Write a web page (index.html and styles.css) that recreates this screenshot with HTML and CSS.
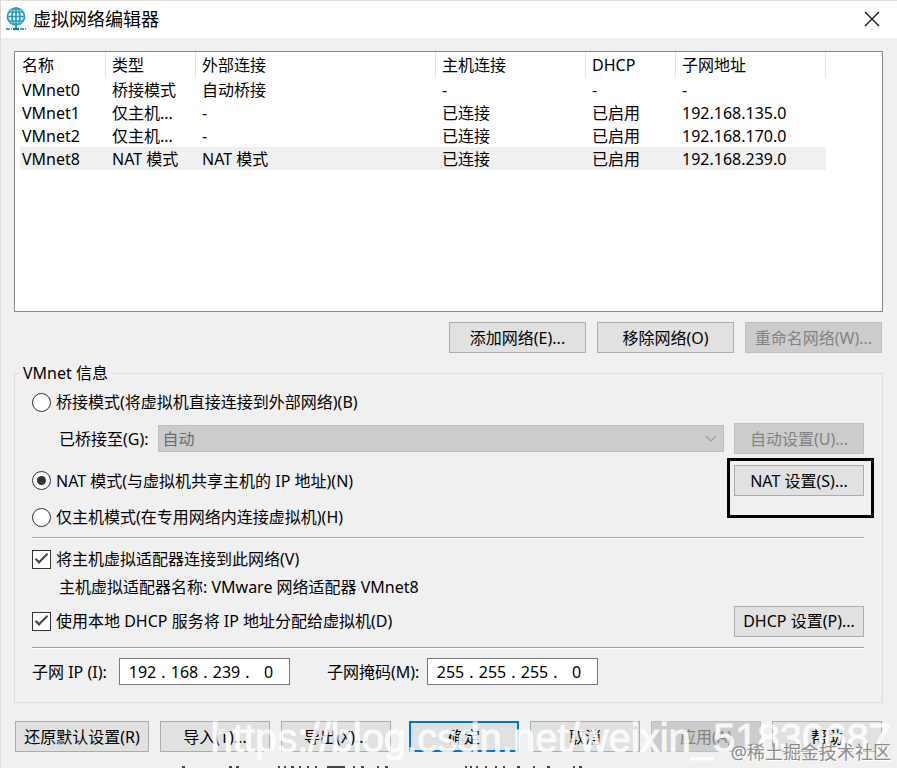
FILE: index.html
```
<!DOCTYPE html>
<html lang="zh-CN">
  <head>
    <meta charset="UTF-8" />
    <title>虚拟网络编辑器</title>
    <link rel="stylesheet" href="styles.css">
  </head>
  <body>
    <header class="titlebar">
      <svg class="app-icon" width="22" height="24" viewBox="0 0 22 24" fill="none" stroke="#2499c0" stroke-width="1.7">
        <circle cx="11" cy="9.500" r="8.500" />
        <ellipse cx="11" cy="9.500" rx="4" ry="8.500" />
        <path d="M11 1v20M2.500 9.500h17M4 5h14M4 14h14" />
        <path d="M1 22h6M15 22h6" stroke="#3fae9c" stroke-width="2" stroke-dasharray="4 1" />
        <path d="M8 22h6" stroke="#167a9c" stroke-width="2.400" />
      </svg>
      <h1>虚拟网络编辑器</h1>
      <button class="close" type="button" aria-label="关闭">
        <svg width="16" height="16" viewBox="0 0 16 16" stroke="#111" stroke-width="1.3">
          <path d="M1 1l14 14M15 1L1 15" />
        </svg>
      </button>
    </header>

    <main>
      <div class="list">
        <table>
          <colgroup>
            <col class="col-name" />
            <col class="col-type" />
            <col class="col-external" />
            <col class="col-host" />
            <col class="col-dhcp" />
            <col class="col-subnet" />
          </colgroup>
          <thead>
            <tr>
              <th>名称</th>
              <th>类型</th>
              <th>外部连接</th>
              <th>主机连接</th>
              <th>DHCP</th>
              <th>子网地址</th>
            </tr>
          </thead>
          <tbody>
            <tr>
              <td>VMnet0</td>
              <td>桥接模式</td>
              <td>自动桥接</td>
              <td>-</td>
              <td>-</td>
              <td>-</td>
            </tr>
            <tr>
              <td>VMnet1</td>
              <td>仅主机...</td>
              <td>-</td>
              <td>已连接</td>
              <td>已启用</td>
              <td>192.168.135.0</td>
            </tr>
            <tr>
              <td>VMnet2</td>
              <td>仅主机...</td>
              <td>-</td>
              <td>已连接</td>
              <td>已启用</td>
              <td>192.168.170.0</td>
            </tr>
            <tr class="selected">
              <td>VMnet8</td>
              <td>NAT 模式</td>
              <td>NAT 模式</td>
              <td>已连接</td>
              <td>已启用</td>
              <td>192.168.239.0</td>
            </tr>
          </tbody>
        </table>
      </div>

      <div class="list-actions">
        <button class="btn" type="button">添加网络(E)...</button>
        <button class="btn" type="button">移除网络(O)</button>
        <button class="btn" type="button" disabled>重命名网络(W)...</button>
      </div>

      <fieldset>
        <legend>VMnet 信息</legend>

        <div class="row">
          <input type="radio" name="mode" id="bridged" />
          <label for="bridged">桥接模式(将虚拟机直接连接到外部网络)(B)</label>
        </div>
        <div class="row row-bridge">
          <label class="sub" for="adapter">已桥接至(G):</label>
          <div class="combo">
            <select id="adapter" disabled>
              <option>自动</option>
            </select>
            <svg width="12" height="8" viewBox="0 0 12 8" fill="none" stroke="#a0a0a0" stroke-width="1.2">
              <path d="M1 1l5 5 5-5" />
            </svg>
          </div>
          <button class="btn side" type="button" disabled>自动设置(U)...</button>
        </div>
        <div class="row row-nat">
          <input type="radio" name="mode" id="nat" checked />
          <label for="nat">NAT 模式(与虚拟机共享主机的 IP 地址)(N)</label>
          <div class="marked">
            <button class="btn side" type="button">NAT 设置(S)...</button>
          </div>
        </div>
        <div class="row row-host">
          <input type="radio" name="mode" id="hostonly" />
          <label for="hostonly">仅主机模式(在专用网络内连接虚拟机)(H)</label>
        </div>

        <hr />

        <div class="row row-connect">
          <input type="checkbox" id="connect" checked />
          <label for="connect">将主机虚拟适配器连接到此网络(V)</label>
        </div>
        <p class="sub">主机虚拟适配器名称: VMware 网络适配器 VMnet8</p>
        <div class="row row-dhcp">
          <input type="checkbox" id="dhcp" checked />
          <label for="dhcp">使用本地 DHCP 服务将 IP 地址分配给虚拟机(D)</label>
          <button class="btn side" type="button">DHCP 设置(P)...</button>
        </div>

        <hr />

        <div class="row row-subnet">
          <label for="ip1">子网 IP (I):</label>
          <div class="ip">
            <input type="text" id="ip1" value="192" /><span>.</span>
            <input type="text" aria-label="子网 IP 2" value="168" /><span>.</span>
            <input type="text" aria-label="子网 IP 3" value="239" /><span>.</span>
            <input type="text" aria-label="子网 IP 4" value="0" />
          </div>
          <label class="mask-label" for="mask1">子网掩码(M):</label>
          <div class="ip">
            <input type="text" id="mask1" value="255" /><span>.</span>
            <input type="text" aria-label="子网掩码 2" value="255" /><span>.</span>
            <input type="text" aria-label="子网掩码 3" value="255" /><span>.</span>
            <input type="text" aria-label="子网掩码 4" value="0" />
          </div>
        </div>
      </fieldset>

      <footer>
        <button class="btn restore" type="button">还原默认设置(R)</button>
        <button class="btn" type="button">导入(T)...</button>
        <button class="btn" type="button">导出(X)...</button>
        <button class="btn primary" type="button">确定</button>
        <button class="btn" type="button">取消</button>
        <button class="btn" type="button" disabled>应用(A)</button>
        <button class="btn" type="button">帮助</button>
        <div class="blog-mark">https://blog.csdn.net/weixin_51830687</div>
        <div class="site-mark">@稀土掘金技术社区</div>
      </footer>
    </main>

    <!-- Top edge of the window below -->
    <svg class="below" width="410" height="2" viewBox="0 0 410 2" stroke="#444" stroke-width="2" aria-hidden="true">
      <path d="M3 1h3M50 1h3M57 1h3M99 1h2M105 1h2M112 1h3M120 1h2M128 1h2M136 1h2M148 1h18M174 1h2M182 1h3M198 1h2M206 1h3" />
      <path d="M286 1h2M291 1h2M297 1h2M306 1h2M316 1h2M324 1h2M338 1h3M354 1h2M368 1h3M394 1h2M400 1h3" />
    </svg>
  </body>
</html>
```
FILE: styles.css
```
:root {
  --face: #f0f0f0;
  --button: #e1e1e1;
  --button-line: #adadad;
  --off: #cccccc;
  --off-line: #bfbfbf;
  --off-text: #838383;
  --accent: #0078d7;
}

*,
*::before,
*::after {
  box-sizing: border-box;
  margin: 0;
  padding: 0;
}

body {
  position: relative;
  min-height: 100vh;
  background: var(--face);
  color: #000;
  font-family: "Noto Sans", "Noto Sans CJK SC", sans-serif;
  font-size: 16px;
  line-height: 20px;
  border-left: 1px solid #dcdcdc;
  overflow: hidden;
}

button,
input,
select {
  font: inherit;
  color: inherit;
}

/* Title bar */
.titlebar {
  display: flex;
  align-items: center;
  height: 38px;
  padding: 0 17px 2px 4px;
  background: #fff;
  border-top: 1px solid #e4e0da;
}

.titlebar h1 {
  flex: 1;
  margin-left: 6px;
  font-size: 18px;
  font-weight: 400;
}

.close {
  display: flex;
  border: none;
  background: none;
}

main {
  padding: 13px 14px 0 13px;
}

/* Network list */
.list {
  height: 261px;
  padding-left: 5px;
  background: #fff;
  border: 1px solid #828790;
  overflow: hidden;
}

table {
  width: 806px;
  table-layout: fixed;
  border-collapse: separate;
  border-spacing: 0;
}

.col-name {
  width: 86px;
}

.col-type,
.col-dhcp {
  width: 90px;
}

.col-external {
  width: 240px;
}

.col-host,
.col-subnet {
  width: 150px;
}

th,
td {
  height: 23px;
  padding-left: 6px;
  font-weight: 400;
  text-align: left;
  white-space: nowrap;
}

th {
  height: 26px;
  border-right: 1px solid #e5e5e5;
}

th:first-child,
td:first-child {
  padding-left: 2px;
}

.selected td {
  background: var(--face);
}

/* Buttons */
.btn {
  height: 31px;
  background: var(--button);
  border: 1px solid var(--button-line);
  white-space: nowrap;
}

.btn:disabled {
  background: var(--off);
  border-color: var(--off-line);
  color: var(--off-text);
}

.list-actions {
  display: flex;
  justify-content: flex-end;
  gap: 11px;
  padding: 10px 1px 8px 0;
}

.list-actions .btn {
  width: 137px;
}

.side {
  width: 130px;
  margin-left: auto;
}

/* VMnet settings */
fieldset {
  padding: 0 18px 8px 17px;
  border: 1px solid #dcdcdc;
}

legend {
  margin-left: -13px;
  padding: 0 4px;
  line-height: 24px;
}

.row {
  display: flex;
  align-items: center;
  height: 34px;
}

.row-bridge {
  height: 39px;
}

.row-nat {
  height: 45px;
}

.row-host {
  height: 28px;
  margin-bottom: 6px;
}

.row-connect {
  height: 40px;
}

.row-dhcp {
  height: 52px;
}

.row-subnet {
  height: 45px;
}

.sub {
  padding-left: 27px;
}

p.sub {
  line-height: 16px;
}

input[type="radio"],
input[type="checkbox"] {
  appearance: none;
  display: grid;
  place-items: center;
  width: 19px;
  height: 19px;
  margin-right: 5px;
  background: #fff;
  border: 1px solid #333;
}

input[type="radio"] {
  border-radius: 50%;
}

input[type="radio"]:checked::before {
  content: "";
  width: 9px;
  height: 9px;
  border-radius: 50%;
  background: #333;
}

input[type="checkbox"]:checked::before {
  content: "";
  width: 13px;
  height: 6px;
  margin-bottom: 4px;
  border: solid #444;
  border-width: 0 0 2px 2px;
  rotate: -45deg;
}

.combo {
  position: relative;
  flex: 1;
  margin: 0 10px 0 9px;
}

.combo select {
  appearance: none;
  display: block;
  width: 100%;
  height: 27px;
  padding-left: 4px;
  background: var(--off);
  border: 1px solid var(--off-line);
  border-radius: 0;
  color: #6d6d6d;
  opacity: 1;
}

.combo svg {
  position: absolute;
  right: 7px;
  top: 10px;
}

/* Black frame around the NAT button */
.marked {
  position: relative;
  margin-left: auto;
}

.marked .btn {
  display: block;
}

.marked::after {
  content: "";
  position: absolute;
  top: -7px;
  left: -7px;
  width: 147px;
  height: 60px;
  border: 3px solid #000;
  pointer-events: none;
}

hr {
  height: 2px;
  border: none;
  border-top: 1px solid #a0a0a0;
  background: #fff;
}

.row-subnet label {
  width: 87px;
}

.row-subnet .mask-label {
  width: 100px;
  margin-left: 37px;
}

.ip {
  display: flex;
  align-items: center;
  width: 171px;
  height: 27px;
  padding-left: 5px;
  background: #fff;
  border: 1px solid #7a7a7a;
}

.ip input {
  width: 35px;
  border: none;
  background: none;
  text-align: center;
}

.ip span {
  width: 7px;
  text-align: center;
}

/* Bottom buttons */
footer {
  position: relative;
  display: flex;
  gap: 11px;
  padding: 18px 1px 16px;
}

footer .btn {
  width: 110px;
}

footer .restore {
  width: 134px;
}

footer .primary {
  margin-left: auto;
  border: 2px solid var(--accent);
}

.blog-mark,
.site-mark {
  position: absolute;
  pointer-events: none;
  white-space: nowrap;
}

.blog-mark {
  right: -8px;
  top: 12px;
  color: #fff;
  font-family: "Liberation Sans", sans-serif;
  font-size: 40px;
  line-height: 46px;
  -webkit-text-stroke: 1px #fff;
  opacity: 0.85;
}

.site-mark {
  right: -8px;
  top: 37px;
  color: #8c8c8c;
  font-size: 18px;
  line-height: 24px;
  text-shadow: 1px 1px 0 #fff;
}

.below {
  position: absolute;
  left: 178px;
  bottom: 0;
}
```
